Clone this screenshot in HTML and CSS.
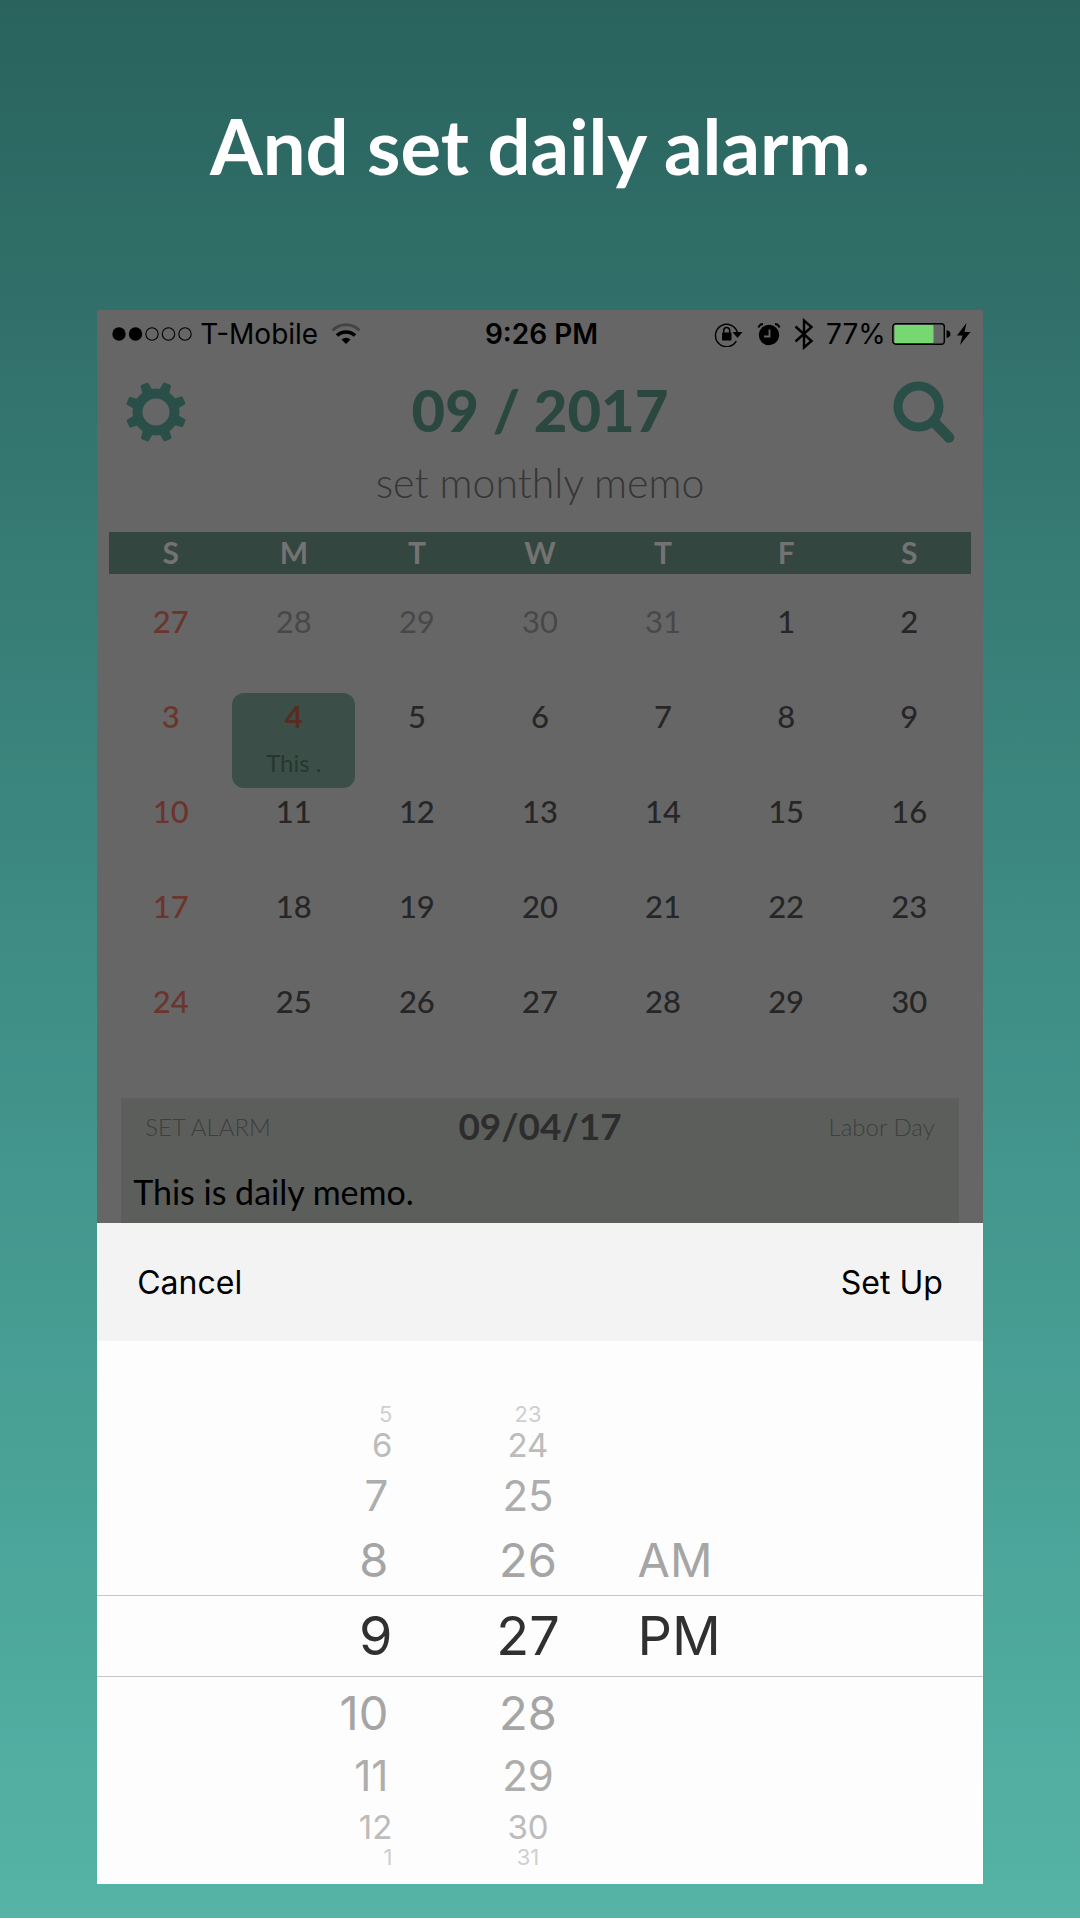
FILE: index.html
```html
<!DOCTYPE html>
<html lang="en">
<head>
<meta charset="utf-8">
<meta name="viewport" content="width=device-width, initial-scale=1">
<title>Calendar – daily alarm</title>
<link rel="stylesheet" href="styles.css">
</head>
<body>
<main class="promo">
  <h1 class="headline">And set daily alarm.</h1>
  <section class="phone">
    <div class="status">
      <div class="status-left">
        <svg width="80" height="14" viewBox="0 0 80 14" aria-hidden="true">
          <circle cx="7" cy="7" r="6.7"/><circle cx="23.5" cy="7" r="6.7"/>
          <g fill="none" stroke="#000" stroke-width="1.1"><circle cx="40" cy="7" r="6.2"/><circle cx="56.500" cy="7" r="6.2"/><circle cx="73" cy="7" r="6.2"/></g>
        </svg>
        <span class="carrier">T-Mobile</span>
        <svg width="30" height="22" viewBox="0 0 30 22" aria-hidden="true">
          <path d="M1.500 7.500a19 19 0 0 1 27 0" fill="none" stroke="#444" stroke-width="3"/>
          <path d="M6 12.500a13 13 0 0 1 18 0" fill="none" stroke="#000" stroke-width="3.500"/>
          <path d="M10.500 16.500a6.500 6.500 0 0 1 9 0L15 21z"/>
        </svg>
      </div>
      <span class="clock">9:26 PM</span>
      <div class="status-right">
        <svg width="29" height="26" viewBox="0 0 29 26" aria-hidden="true">
          <path d="M22.300 20.200A11.200 11.200 0 1 1 23.600 12" fill="none" stroke="#000" stroke-width="1.400"/>
          <path d="M18.500 11h10l-5 6z"/><rect x="8" y="11.500" width="9.500" height="8" rx="1"/>
          <path d="M9.700 12V9.500a3 3 0 0 1 6 0V12" fill="none" stroke="#000" stroke-width="1.500"/>
        </svg>
        <svg class="ico-alarm" width="24" height="24" viewBox="0 0 24 24" aria-hidden="true">
          <circle cx="12" cy="13" r="10.200"/>
          <path d="M1.500 5.500A5 5 0 0 1 6 2M22.500 5.500A5 5 0 0 0 18 2" fill="none" stroke="#000" stroke-width="2"/>
          <path d="M12.500 7.500v7H7" fill="none" stroke="#666" stroke-width="1.800"/>
        </svg>
        <svg class="ico-bt" width="20" height="32" viewBox="0 0 20 32" aria-hidden="true">
          <path d="M1.500 8.500l16 14.500-7.500 6.500v-27l7.500 6.500-16 14.500" fill="none" stroke="#000" stroke-width="2.400"/>
        </svg>
        <span class="percent">77%</span>
        <svg width="59" height="22" viewBox="0 0 59 22" aria-hidden="true">
          <rect x=".8" y=".8" width="51.500" height="20.400" rx="3" fill="none" stroke="#000" stroke-width="1.400"/>
          <rect x="2.500" y="2" width="39" height="18" rx="1" fill="#77d771"/>
          <path d="M54.500 7q4 1 4 4t-4 4z"/>
        </svg>
        <svg class="ico-bolt" width="14" height="22" viewBox="0 0 14 22" aria-hidden="true"><path d="M9.500 0L0 12.500h5.500L3 22 13.500 9H7.500z"/></svg>
      </div>
    </div>

    <header class="bar">
      <button class="icon-button" type="button" aria-label="Settings">
        <svg width="62" height="62" viewBox="-31 -31 62 62" aria-hidden="true">
          <g transform="rotate(22)" fill="#294f48">
            <path id="tooth" d="M-5.500-20l1.200-9.300q.2-1.200 1.400-1.200h5.800q1.200 0 1.400 1.200L5.500-20z"/>
            <use href="#tooth" transform="rotate(45)"/><use href="#tooth" transform="rotate(90)"/><use href="#tooth" transform="rotate(135)"/><use href="#tooth" transform="rotate(180)"/><use href="#tooth" transform="rotate(225)"/><use href="#tooth" transform="rotate(270)"/><use href="#tooth" transform="rotate(315)"/>
          </g>
          <circle r="18.500" fill="none" stroke="#294f48" stroke-width="10"/>
        </svg>
      </button>
      <h2 class="month">09 / 2017</h2>
      <button class="icon-button" type="button" aria-label="Search">
        <svg width="62" height="62" viewBox="0 0 62 62" fill="none" stroke="#294f48" aria-hidden="true">
          <circle cx="25.500" cy="25.500" r="20.500" stroke-width="9"/><path d="M41 41l15 15.500" stroke-width="10.500" stroke-linecap="round"/>
        </svg>
      </button>
    </header>
    <input class="month-memo" type="text" aria-label="Monthly memo" placeholder="set monthly memo">

    <table class="calendar">
      <thead><tr><th>S</th><th>M</th><th>T</th><th>W</th><th>T</th><th>F</th><th>S</th></tr></thead>
      <tbody>
        <tr><td>27</td><td class="other">28</td><td class="other">29</td><td class="other">30</td><td class="other">31</td><td>1</td><td>2</td></tr>
        <tr><td>3</td><td class="selected">4<span class="note">This .</span></td><td>5</td><td>6</td><td>7</td><td>8</td><td>9</td></tr>
        <tr><td>10</td><td>11</td><td>12</td><td>13</td><td>14</td><td>15</td><td>16</td></tr>
        <tr><td>17</td><td>18</td><td>19</td><td>20</td><td>21</td><td>22</td><td>23</td></tr>
        <tr><td>24</td><td>25</td><td>26</td><td>27</td><td>28</td><td>29</td><td>30</td></tr>
      </tbody>
    </table>

    <section class="day">
      <div class="day-head">
        <button class="set-alarm" type="button">SET ALARM</button>
        <h3 class="date">09/04/17</h3>
        <span class="holiday">Labor Day</span>
      </div>
      <textarea class="day-memo" rows="1" aria-label="Daily memo">This is daily memo.</textarea>
    </section>

    <section class="sheet">
      <div class="toolbar">
        <button class="action" type="button">Cancel</button>
        <button class="action" type="button">Set Up</button>
      </div>
      <div class="wheel" role="group" aria-label="Alarm time">
        <div class="row far"><span>5</span><span>23</span></div>
        <div class="row third"><span>6</span><span>24</span></div>
        <div class="row second"><span>7</span><span>25</span></div>
        <div class="row first"><span>8</span><span>26</span><span>AM</span></div>
        <div class="row current"><span>9</span><span>27</span><span>PM</span></div>
        <div class="row first"><span>10</span><span>28</span></div>
        <div class="row second"><span>11</span><span>29</span></div>
        <div class="row third"><span>12</span><span>30</span></div>
        <div class="row far"><span>1</span><span>31</span></div>
      </div>
    </section>
  </section>
</main>
</body>
</html>
```
FILE: styles.css
```css
* { box-sizing: border-box; }
body { margin: 0; background: #fff; font-family: Lato, "Liberation Sans", sans-serif; color: #000; }
button, input, textarea { font: inherit; color: inherit; border: 0; margin: 0; padding: 0; background: none; }
h1, h2, h3 { margin: 0; }
svg { display: block; flex: none; }

.promo { padding: 0 9% 34px; background: linear-gradient(#2a635e, #31706a 16%, #41938a 57%, #55b4a6); }
.headline { padding: 96px 0 114px; font-size: 76px; line-height: 100px; font-weight: 700; text-align: center; color: #fff; white-space: nowrap; }
.phone { background: #666; }

.status { display: grid; grid-template-columns: 1fr auto 1fr; align-items: center; height: 48px; padding: 0 12px 0 15px; font-family: Inter, "Liberation Sans", sans-serif; font-size: 28px; line-height: 32px; }
.status-left, .status-right { display: flex; align-items: center; }
.status-left { gap: 8px; }
.status-left svg:last-child { margin-left: 5px; }
.status-right { justify-content: flex-end; }
.clock { font-weight: 600; }
.ico-alarm { margin-left: 14px; }
.ico-bt { margin-left: 13px; }
.percent { margin: 0 6px 0 12px; }
.ico-bolt { margin-left: 6px; }

.bar { display: flex; align-items: center; justify-content: space-between; padding: 10px 28px 0; height: 98px; }
.icon-button { display: block; }
.month { padding-bottom: 4px; font-size: 58px; line-height: 64px; font-weight: 900; color: #2b4840; }
.month-memo { display: block; width: 100%; height: 64px; padding-bottom: 12px; font-size: 41px; font-weight: 300; text-align: center; }
.month-memo::placeholder { color: #363636; opacity: 1; }

.calendar { width: calc(100% - 24px); margin: 12px 12px 25px; table-layout: fixed; border-collapse: collapse; font-size: 31px; line-height: 40px; text-align: center; color: #262626; }
.calendar th { height: 42px; padding: 0 0 2px; background: #33463f; color: #737373; font-size: 30px; font-weight: 700; }
.calendar tbody::before { content: ""; display: table-row; height: 24px; }
.calendar td { height: 95px; padding: 3px 0 0; vertical-align: top; font-weight: 500; }
.calendar td:first-child { color: #6b342c; }
.calendar td.other { color: #484848; font-weight: 400; }
.calendar td.selected { background: #3b4f48; border-radius: 12px; color: #572d22; font-weight: 700; }
.note { display: block; padding-top: 7px; font-size: 24px; font-weight: 400; line-height: 40px; color: #29352f; }

.day { margin: 0 24px; background: #5c5e5c; }
.day-head { display: grid; grid-template-columns: 1fr auto 1fr; align-items: center; height: 60px; padding: 0 24px 4px; font-size: 24px; font-weight: 300; color: #3e3f3e; }
.set-alarm { justify-self: start; }
.date { font-size: 37px; line-height: 40px; color: #2d2d2d; }
.holiday { justify-self: end; }
.day-memo { display: block; width: 100%; height: 65px; padding: 14px 12px 0; font-size: 34px; line-height: 40px; resize: none; overflow: hidden; outline: 0; }

.sheet { background: #fdfdfd; font-family: Inter, "Liberation Sans", sans-serif; }
.toolbar { display: flex; justify-content: space-between; height: 118px; padding: 2px 40px 0; background: #f3f3f3; }
.action { font-size: 32px; line-height: 40px; }

.wheel { padding: 66px 0 19px; }
.row { display: grid; grid-template-columns: 295fr 245fr 345fr; align-items: center; color: #a5a5a5; }
.row span:first-child { text-align: right; }
.row span:nth-child(2) { padding-left: 26px; text-align: center; }
.row.far { height: 15px; font-size: 22px; line-height: 15px; color: #cfcfcf; }
.row.third { height: 46px; font-size: 33px; line-height: 40px; color: #bcbcbc; }
.row.second { height: 56px; font-size: 42px; line-height: 48px; color: #adadad; }
.row.first { height: 71px; font-size: 47px; line-height: 56px; }
.row.first span:first-child, .row.second span:first-child { padding-right: 4px; }
.row.current { height: 82px; border: solid #c8c8c8; border-width: 1px 0; font-size: 54px; line-height: 64px; color: #303030; }
```
